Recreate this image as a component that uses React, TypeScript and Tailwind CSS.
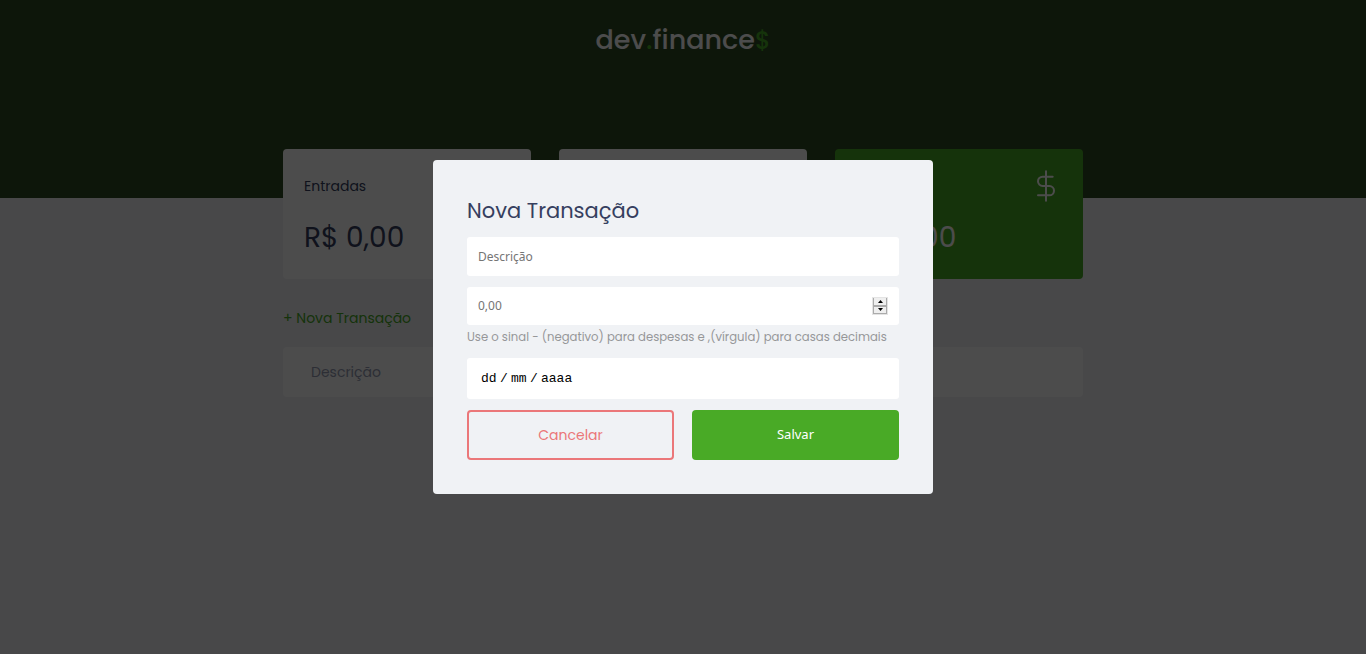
import React from "react";

function DollarIcon() {
  return (
    <svg
      viewBox="0 0 24 24"
      className="size-8"
      fill="none"
      stroke="currentColor"
      strokeWidth="1.5"
      strokeLinecap="round"
      strokeLinejoin="round"
      aria-hidden="true"
    >
      <path d="M12 1v22" />
      <path d="M17 5H9.5a3.5 3.5 0 0 0 0 7h5a3.5 3.5 0 0 1 0 7H6" />
    </svg>
  );
}

function ArrowIcon({ up }: { up: boolean }) {
  return (
    <svg
      viewBox="0 0 24 24"
      className={up ? "size-8 text-[#12a454]" : "size-8 text-[#e92929]"}
      fill="none"
      stroke="currentColor"
      strokeWidth="1.5"
      strokeLinecap="round"
      strokeLinejoin="round"
      aria-hidden="true"
    >
      <circle cx="12" cy="12" r="10" />
      <path d={up ? "M16 12l-4-4-4 4M12 16V8" : "M8 12l4 4 4-4M12 8v8"} />
    </svg>
  );
}

function Card({ title, icon, highlight = false }: { title: string; icon: React.ReactNode; highlight?: boolean }) {
  return (
    <div
      className={
        highlight
          ? "rounded bg-[#49aa26] p-[21px] text-white"
          : "rounded bg-white p-[21px] text-[#363f5f]"
      }
    >
      <h3 className="flex h-8 items-center justify-between text-sm">
        <span>{title}</span>
        {icon}
      </h3>
      <p className="mt-4 text-[28px] leading-10">R$ 0,00</p>
    </div>
  );
}

const field = "w-full min-w-0 bg-transparent font-['Noto_Sans',sans-serif] text-xs text-black outline-none placeholder:text-[#757575]";
const segment = "min-w-0 bg-transparent p-0 outline-none placeholder:text-black";

function Modal() {
  return (
    <div className="fixed inset-0 flex items-center justify-center bg-black/70">
      <div
        role="dialog"
        aria-labelledby="modal-title"
        className="w-full max-w-[500px] rounded bg-[#f0f2f5] p-[34px]"
      >
        <h2 id="modal-title" className="text-[21px] leading-[33px] text-[#363f5f]">
          Nova Transação
        </h2>
        <form className="mt-[10px] flex flex-col gap-[11px]">
          <div className="flex h-[39px] items-center rounded-[3px] bg-white px-[11px]">
            <input className={field} type="text" aria-label="Descrição" placeholder="Descrição" />
          </div>
          <div>
            <div className="flex h-[38px] items-center rounded-[3px] bg-white px-[11px]">
              <input
                className={`${field} [appearance:textfield]`}
                type="number"
                step="0.01"
                aria-label="Valor"
                placeholder="0,00"
              />
              <div className="flex h-[18px] w-4 shrink-0 flex-col border border-[#e4e4e4] bg-[#ababab] px-px pb-px">
                <button type="button" aria-label="Aumentar" className="flex flex-1 items-center justify-center bg-[#efefef]">
                  <svg viewBox="0 0 5 3" className="h-[3px] w-[5px]" aria-hidden="true">
                    <path d="M0 3L2.5 0L5 3z" />
                  </svg>
                </button>
                <button type="button" aria-label="Diminuir" className="mt-0.5 flex flex-1 items-center justify-center bg-[#efefef]">
                  <svg viewBox="0 0 5 3" className="h-[3px] w-[5px]" aria-hidden="true">
                    <path d="M0 0L2.5 3L5 0z" />
                  </svg>
                </button>
              </div>
            </div>
            <div className="pt-0.5 text-sm leading-5">
              <small className="block text-[#969799] [font-size:smaller]">
                Use o sinal - (negativo) para despesas e ,(vírgula) para casas decimais
              </small>
            </div>
          </div>
          <div
            role="group"
            aria-label="Data"
            className="flex h-[41px] items-center rounded-[3px] bg-white px-[14px] font-['Liberation_Mono',monospace] text-[13px] text-black"
          >
            <input className={`${segment} w-4`} aria-label="Dia" placeholder="dd" maxLength={2} />
            <span className="w-[14px] text-center">/</span>
            <input className={`${segment} w-4`} aria-label="Mês" placeholder="mm" maxLength={2} />
            <span className="w-[14px] text-center">/</span>
            <input className={`${segment} w-8`} aria-label="Ano" placeholder="aaaa" maxLength={4} />
          </div>
          <div className="grid grid-cols-2 gap-[18px]">
            <a
              href="#cancelar"
              className="flex h-[50px] items-center justify-center rounded border-2 border-[#eb7779] text-sm text-[#eb7779]"
            >
              Cancelar
            </a>
            <button
              type="submit"
              className="h-[50px] rounded bg-[#49aa26] font-['Noto_Sans',sans-serif] text-[13px] text-white"
            >
              Salvar
            </button>
          </div>
        </form>
      </div>
    </div>
  );
}

export default function App() {
  return (
    <div className="min-h-screen bg-[#f0f2f5] font-['Poppins',sans-serif]">
      <header className="h-[198px] bg-[#2d4a22] pt-[19px] text-center">
        <h1 className="text-[27px] leading-[42px] font-medium text-white">
          dev<span className="text-[#49aa26]">.</span>finance<span className="text-2xl text-[#49aa26]">$</span>
        </h1>
      </header>
      <main className="mx-auto -mt-[49px] max-w-[800px]">
        <section aria-label="Balanço" className="grid grid-cols-3 gap-7">
          <Card title="Entradas" icon={<ArrowIcon up />} />
          <Card title="Saídas" icon={<ArrowIcon up={false} />} />
          <Card title="Total" icon={<DollarIcon />} highlight />
        </section>
        <section aria-label="Transações" className="mt-7">
          <a href="#nova" className="block w-fit text-sm leading-[22px] text-[#49aa26]">
            + Nova Transação
          </a>
          <table className="mt-[18px] w-full table-fixed text-left text-sm text-[#969cb3]">
            <thead>
              <tr className="h-[50px] bg-white">
                <th className="w-1/3 rounded-l px-7 font-normal">Descrição</th>
                <th className="w-1/4 px-7 font-normal">Valor</th>
                <th className="w-1/4 px-7 font-normal">Data</th>
                <th className="rounded-r" aria-label="Ações" />
              </tr>
            </thead>
          </table>
        </section>
      </main>
      <Modal />
    </div>
  );
}
